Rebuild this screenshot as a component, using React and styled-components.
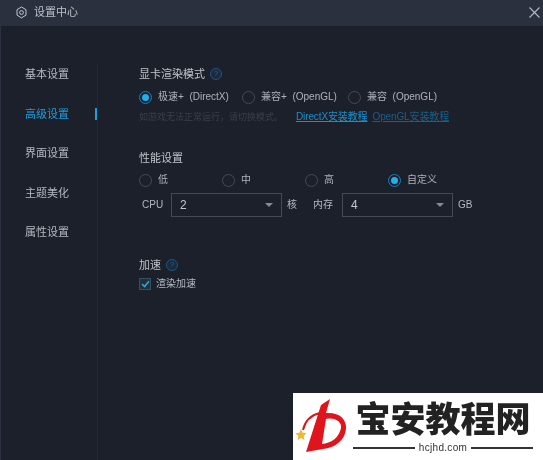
import React from "react";
import styled, { createGlobalStyle } from "styled-components";

const GlobalStyle = createGlobalStyle`
  html, body {
    margin: 0;
    padding: 0;
    background: #1c202b;
  }
  * {
    box-sizing: border-box;
  }
`;

const NAV_ITEMS = ["基本设置", "高级设置", "界面设置", "主题美化", "属性设置"];
const RENDER_MODES = [
  { label: "极速+\u00a0\u00a0(DirectX)", width: 103, checked: true },
  { label: "兼容+\u00a0\u00a0(OpenGL)", width: 106 },
  { label: "兼容\u00a0\u00a0(OpenGL)" },
];
const LEVELS = [
  { label: "低" },
  { label: "中" },
  { label: "高" },
  { label: "自定义", checked: true },
];

const GearIcon = () => (
  <svg width="13" height="13" viewBox="0 0 13 13" fill="none" stroke="#c3c8cf" strokeWidth="1">
    <path d="M6.5 1 11 3.7v5.4L6.5 11.9 2 9.1V3.7z" />
    <circle cx="6.5" cy="6.5" r="1.9" />
  </svg>
);

const CloseIcon = () => (
  <svg width="11" height="11" viewBox="0 0 11 11" stroke="#b5bac2" strokeWidth="1.1">
    <path d="M0.5 0.5 10.5 10.5M10.5 0.5 0.5 10.5" />
  </svg>
);

const CheckIcon = () => (
  <svg width="9" height="8" viewBox="0 0 9 8" fill="none" stroke="#2da6e0" strokeWidth="1.6">
    <path d="M1 4 3.5 6.5 8 1.2" />
  </svg>
);

const Logo = () => (
  <svg width="62" height="67" viewBox="0 0 62 67" style={{ flex: "none" }}>
    <path d="M10 37C12 28 18 22 27 20" fill="none" stroke="#d9161d" strokeWidth="2" />
    <path
      fillRule="evenodd"
      d="M28 12 37 6 33 20C46 19 54 26 53 36 52 47 42 55 30 56L13 59zM33 26 29 51C38 50 46 45 48 35 49 29 42 24 33 26z"
      fill="#e0141c"
    />
    <path d="M8 36 9.6 39.7 13.6 40.3 10.7 43 11.4 47 8 45 4.6 47 5.3 43 2.4 40.3 6.4 39.7z" fill="#f2b632" />
  </svg>
);

const App = () => {
  return (
    <>
      <GlobalStyle />
      <Window>
        <TitleBar>
          <TitleGroup>
            <GearIcon />
            <TitleText>设置中心</TitleText>
          </TitleGroup>
          <CloseIcon />
        </TitleBar>
        <Body>
          <Sidebar>
            {NAV_ITEMS.map((item, index) => (
              <NavItem key={item} $active={index === 1}>
                {item}
              </NavItem>
            ))}
          </Sidebar>
          <Content>
            <SectionTitle>
              显卡渲染模式
              <HelpBadge>?</HelpBadge>
            </SectionTitle>
            <ModeRow>
              {RENDER_MODES.map((mode) => (
                <RadioItem key={mode.label} style={mode.width ? { width: mode.width } : undefined}>
                  <Radio $checked={mode.checked} />
                  {mode.label}
                </RadioItem>
              ))}
            </ModeRow>
            <HintRow>
              <HintText>如游戏无法正常运行，请切换模式。</HintText>
              <HintLink $bright>DirectX安装教程</HintLink>
              <HintLink>OpenGL安装教程</HintLink>
            </HintRow>

            <PerformanceTitle>性能设置</PerformanceTitle>
            <LevelRow>
              {LEVELS.map((level) => (
                <RadioItem key={level.label}>
                  <Radio $checked={level.checked} />
                  {level.label}
                </RadioItem>
              ))}
            </LevelRow>
            <SelectRow>
              <CpuLabel>CPU</CpuLabel>
              <Select>
                2
                <Caret />
              </Select>
              <Unit>核</Unit>
              <MemoryLabel>内存</MemoryLabel>
              <Select>
                4
                <Caret />
              </Select>
              <Unit>GB</Unit>
            </SelectRow>

            <AccelTitle>
              加速
              <HelpBadge>?</HelpBadge>
            </AccelTitle>
            <CheckRow>
              <CheckBox>
                <CheckIcon />
              </CheckBox>
              渲染加速
            </CheckRow>
          </Content>
        </Body>
        <Watermark>
          <Logo />
          <BrandColumn>
            <BrandName>宝安教程网</BrandName>
            <BrandUrl>hcjhd.com</BrandUrl>
          </BrandColumn>
        </Watermark>
      </Window>
    </>
  );
};

const Window = styled.div`
  position: relative;
  display: flex;
  flex-direction: column;
  width: 543px;
  height: 460px;
  overflow: hidden;
  background: #1c202b;
  border-left: 1px solid #2a3140;
  color: #b4b9c0;
  font-family: "Liberation Sans", "Noto Sans CJK SC", sans-serif;
  font-size: 10px;
  line-height: 14px;
  filter: blur(0.45px);
`;

const TitleBar = styled.div`
  flex: none;
  display: flex;
  align-items: center;
  justify-content: space-between;
  height: 26px;
  padding: 0 3px 2px 14px;
  background: #2a303e;
`;

const TitleGroup = styled.div`
  display: flex;
  align-items: center;
  gap: 6px;
`;

const TitleText = styled.span`
  font-size: 11px;
  color: #bcc1c8;
`;

const Body = styled.div`
  flex: 1;
  display: flex;
  min-height: 0;
`;

const Sidebar = styled.nav`
  flex: none;
  display: flex;
  flex-direction: column;
  gap: 25.5px;
  width: 97px;
  margin-top: 38px;
  padding-top: 3px;
  border-right: 1px solid #232834;
  font-size: 11px;
`;

const NavItem = styled.div`
  position: relative;
  padding-left: 24px;
  color: ${(p) => (p.$active ? "#1f9ddb" : "#b4b9c0")};

  &::after {
    content: "";
    display: ${(p) => (p.$active ? "block" : "none")};
    position: absolute;
    right: 0;
    top: 1px;
    width: 2px;
    height: 12px;
    background: #1f9ddb;
  }
`;

const Content = styled.main`
  flex: 1;
  padding: 41px 0 0 41px;
`;

const SectionTitle = styled.div`
  display: flex;
  align-items: center;
  gap: 5px;
  height: 14px;
  color: #bfc4ca;
  font-size: 11px;
`;

const HelpBadge = styled.span`
  display: inline-flex;
  align-items: center;
  justify-content: center;
  width: 12px;
  height: 12px;
  border: 1.5px solid #1c5580;
  border-radius: 50%;
  background: #1b2a3c;
  color: #1c6aa0;
  font-size: 8px;
  line-height: 1;
`;

const ModeRow = styled.div`
  display: flex;
  margin-top: 9px;
`;

const LevelRow = styled.div`
  display: grid;
  grid-template-columns: repeat(4, 83px);
  margin-top: 8px;
`;

const RadioItem = styled.label`
  display: flex;
  align-items: center;
  gap: 6px;
  color: #aeb3ba;
  white-space: nowrap;
`;

const Radio = styled.span`
  flex: none;
  display: flex;
  align-items: center;
  justify-content: center;
  width: 13px;
  height: 13px;
  border: 1.5px solid ${(p) => (p.$checked ? "#1f7fb8" : "#454a55")};
  border-radius: 50%;

  &::after {
    content: "";
    display: ${(p) => (p.$checked ? "block" : "none")};
    width: 7px;
    height: 7px;
    border-radius: 50%;
    background: #23aeea;
  }
`;

const HintRow = styled.div`
  display: flex;
  margin-top: 6px;
  white-space: nowrap;
`;

const HintText = styled.span`
  width: 157px;
  color: #3a3f4b;
  font-size: 9px;
`;

const HintLink = styled.span`
  margin-right: 5px;
  color: ${(p) => (p.$bright ? "#1b8fcc" : "#1b5f88")};
  letter-spacing: -0.12px;
  text-decoration: underline;
`;

const PerformanceTitle = styled.div`
  margin-top: 27px;
  color: #bfc4ca;
  font-size: 11px;
`;

const SelectRow = styled.div`
  display: flex;
  align-items: center;
  margin-top: 6px;
`;

const CpuLabel = styled.span`
  width: 32px;
  padding-left: 3px;
`;

const MemoryLabel = styled.span`
  width: 29px;
  margin-left: 16px;
`;

const Unit = styled.span`
  margin-left: 5px;
`;

const Select = styled.div`
  display: flex;
  align-items: center;
  justify-content: space-between;
  width: 111px;
  height: 24px;
  padding: 0 8px;
  border: 1px solid #444955;
  color: #c3c8ce;
  font-size: 12px;
`;

const Caret = styled.span`
  width: 0;
  height: 0;
  border-left: 4.5px solid transparent;
  border-right: 4.5px solid transparent;
  border-top: 4px solid #858a93;
`;

const AccelTitle = styled(SectionTitle)`
  margin-top: 41px;
`;

const CheckRow = styled.div`
  display: flex;
  align-items: center;
  gap: 5px;
  margin-top: 5px;
`;

const CheckBox = styled.span`
  display: flex;
  align-items: center;
  justify-content: center;
  width: 12px;
  height: 12px;
  border: 1px solid #35505f;
  background: #20303c;
`;

const Watermark = styled.div`
  position: absolute;
  left: 292px;
  top: 393px;
  display: flex;
  width: 250px;
  height: 67px;
  background: #fff;
`;

const BrandColumn = styled.div`
  display: flex;
  flex-direction: column;
  align-items: center;
  width: 180px;
  margin-left: -2px;
  padding-top: 3px;
`;

const BrandName = styled.div`
  color: #222;
  font-family: "Noto Sans CJK SC", sans-serif;
  font-size: 35px;
  font-weight: 900;
  line-height: 42px;
  white-space: nowrap;
`;

const BrandUrl = styled.div`
  display: flex;
  align-items: center;
  gap: 4px;
  width: 180px;
  margin-top: 4px;
  color: #333;
  font-size: 10px;
  line-height: 12px;
  letter-spacing: 0.3px;
  white-space: nowrap;

  &::before,
  &::after {
    content: "";
    flex: 1;
    height: 1.5px;
    background: #333;
  }
`;

export default App;
